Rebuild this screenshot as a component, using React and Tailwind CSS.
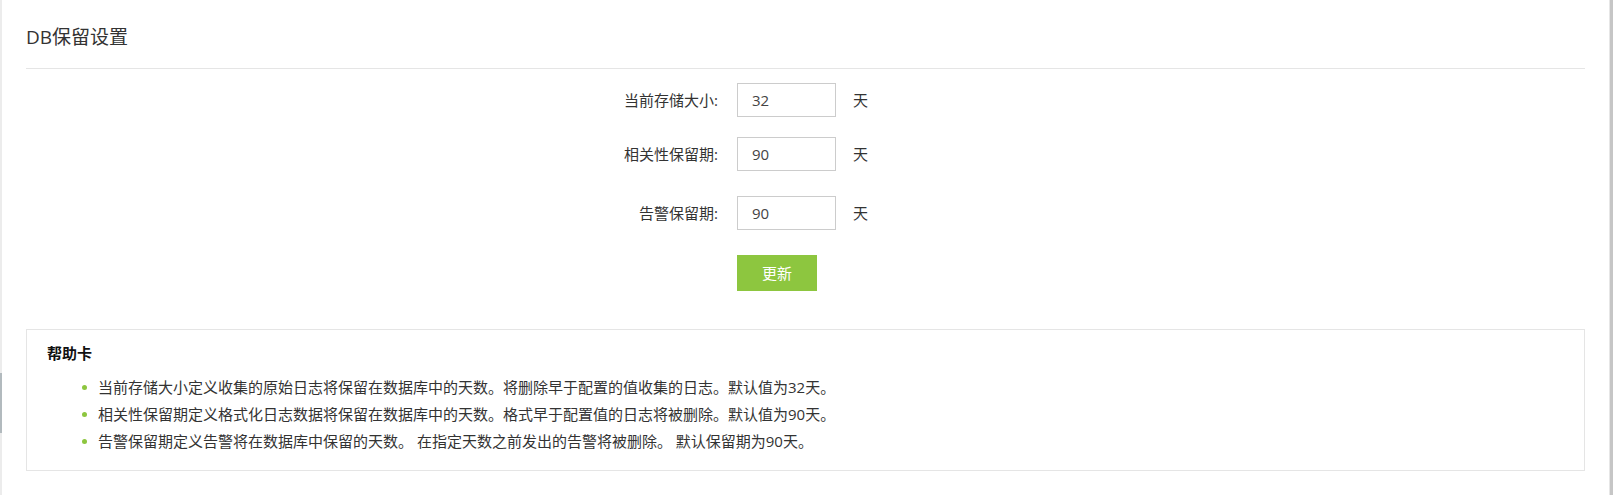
const FONT = { fontFamily: '"Open Sans", "Noto Sans CJK SC", sans-serif' };

const FIELDS = [
  { label: "当前存储大小:", value: "32" },
  { label: "相关性保留期:", value: "90" },
  { label: "告警保留期:", value: "90" },
];

const HELP = [
  "当前存储大小定义收集的原始日志将保留在数据库中的天数。将删除早于配置的值收集的日志。默认值为32天。",
  "相关性保留期定义格式化日志数据将保留在数据库中的天数。格式早于配置值的日志将被删除。默认值为90天。",
  "告警保留期定义告警将在数据库中保留的天数。 在指定天数之前发出的告警将被删除。 默认保留期为90天。",
];

function FieldRow({ label, value, className }) {
  return (
    <div className={`flex items-center ${className}`}>
      <label className="w-[692px] text-right text-[15px] text-[#333]">{label}</label>
      <input
        defaultValue={value}
        className="ml-[19px] h-[34px] w-[99px] border border-[#cccccc] px-[14px] text-[15px] text-[#444] outline-none"
      />
      <span className="ml-[17px] text-[15px] text-[#333]">天</span>
    </div>
  );
}

export default function App() {
  return (
    <div className="flex min-h-[495px] bg-white" style={FONT}>
      {/* left edge */}
      <div className="flex w-[2px] flex-col bg-[#ececec]">
        <div className="h-[373px]" />
        <div className="h-[60px] bg-[#b2babe]" />
      </div>

      <div className="flex-1 px-6">
        <div className="pt-[23px] text-[19px] leading-[28px] text-[#333]">DB保留设置</div>
        <div className="mt-[17px] h-px bg-[#e5e5e5]" />

        <FieldRow {...FIELDS[0]} className="mt-[14px]" />
        <FieldRow {...FIELDS[1]} className="mt-[20px]" />
        <FieldRow {...FIELDS[2]} className="mt-[25px]" />

        <div className="mt-[25px] pl-[711px]">
          <button className="h-[36px] w-[80px] bg-[#8dc63f] text-[15px] text-white">更新</button>
        </div>

        <div className="mt-[38px] border border-[#e5e5e5] px-[20px] pb-[15px] pt-[12px]">
          <div className="text-[15px] font-bold leading-[22px] text-[#111]">帮助卡</div>
          <ul className="mt-[10px] pl-[35px]">
            {HELP.map((t) => (
              <li key={t} className="flex items-center text-[15px] leading-[27px] text-[#333]">
                <span className="mr-[11px] h-[5px] w-[5px] rounded-full bg-[#8dc63f]" />
                {t}
              </li>
            ))}
          </ul>
        </div>
      </div>

      {/* right edge */}
      <div className="w-px bg-[#e6e6e6]" />
      <div className="w-[3px] bg-[#c6c6c6]" />
    </div>
  );
}
